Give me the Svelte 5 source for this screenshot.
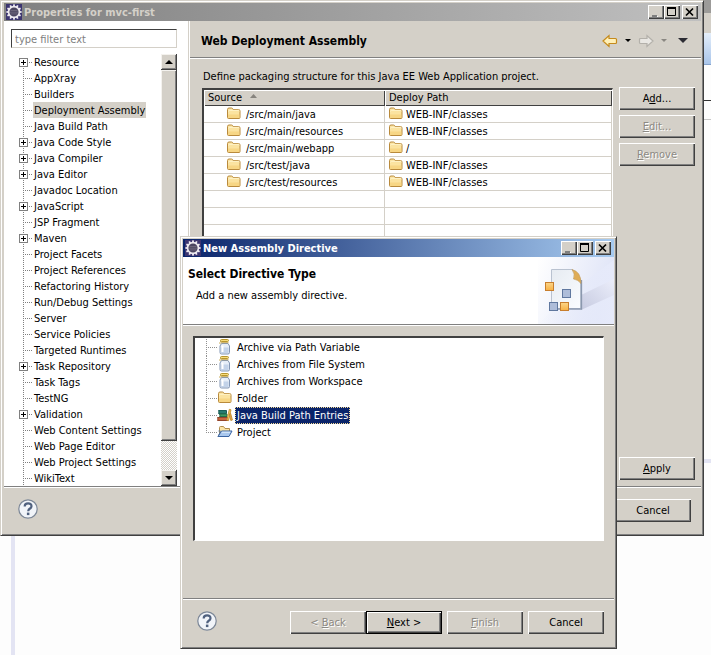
<script>
  const pages = [
    { name: 'Resource', open: true }, { name: 'AppXray' }, { name: 'Builders' },
    { name: 'Deployment Assembly', selected: true }, { name: 'Java Build Path' },
    { name: 'Java Code Style', open: true }, { name: 'Java Compiler', open: true },
    { name: 'Java Editor', open: true }, { name: 'Javadoc Location' },
    { name: 'JavaScript', open: true }, { name: 'JSP Fragment' }, { name: 'Maven', open: true },
    { name: 'Project Facets' }, { name: 'Project References' }, { name: 'Refactoring History' },
    { name: 'Run/Debug Settings' }, { name: 'Server' }, { name: 'Service Policies' },
    { name: 'Targeted Runtimes' }, { name: 'Task Repository', open: true }, { name: 'Task Tags' },
    { name: 'TestNG' }, { name: 'Validation', open: true }, { name: 'Web Content Settings' },
    { name: 'Web Page Editor' }, { name: 'Web Project Settings' }, { name: 'WikiText' }
  ];

  const mappings = [
    ['/src/main/java', 'WEB-INF/classes'],
    ['/src/main/resources', 'WEB-INF/classes'],
    ['/src/main/webapp', '/'],
    ['/src/test/java', 'WEB-INF/classes'],
    ['/src/test/resources', 'WEB-INF/classes']
  ];
  const emptyRows = Array.from({ length: 14 }, (_, i) => i);

  const directives = [
    { name: 'Archive via Path Variable', icon: 'jar' },
    { name: 'Archives from File System', icon: 'jar' },
    { name: 'Archives from Workspace', icon: 'jar' },
    { name: 'Folder', icon: 'folder' },
    { name: 'Java Build Path Entries', icon: 'books' },
    { name: 'Project', icon: 'project' }
  ];
  const teeth = Array.from({ length: 12 }, (_, i) => i * 30);
  let selected = $state('Java Build Path Entries');
</script>

{#snippet gear()}
  <svg class="gear" width="16" height="16" viewBox="0 0 16 16" aria-hidden="true">
    <rect width="16" height="16" fill="#3c3570" />
    <circle cx="8" cy="8" r="5.4" fill="#4b4560" stroke="#eeeaf0" stroke-width="1.6" />
    {#each teeth as a}
      <rect x="7.1" y="0.4" width="1.8" height="2.4" fill="#eeeaf0" transform="rotate({a} 8 8)" />
    {/each}
    <path d="M4.5 6.5h7M4 8.2h8M4.6 9.9h6.8" stroke="#746c80" stroke-width="0.8" />
  </svg>
{/snippet}

{#snippet folder()}
  <svg width="16" height="16" viewBox="0 0 16 16" aria-hidden="true">
    <path d="M1.500 11.500v-8q0-1.500 1.500-1.500h2.500q1.200 0 1.500 1.500h5.500q1.500 0 1.500 1.500v6.500q0 1-1 1h-10.500q-1 0-1-1z" fill="#fbe3a0" stroke="#b98a3c" />
    <path d="M2.500 5.500q0-1.200 1.200-1.200h8.600q1 0 1 1" fill="none" stroke="#fff4cc" />
    <path d="M2 8.500h11.500v3.500h-11.500z" fill="#f5cd73" opacity=".6" />
  </svg>
{/snippet}

{#snippet jar()}
  <svg width="16" height="16" viewBox="0 0 16 16" aria-hidden="true">
    <path d="M3 5q-.5-2 1-3" fill="none" stroke="#c8a950" />
    <rect x="3.500" y=".5" width="8" height="2" rx="1" fill="#f6dc7c" stroke="#b7952b" />
    <path d="M4.500 4.500l-1.500 2.500v6.500q0 1.500 1.500 1.500h6.500q1.500 0 1.500-1.500v-6.500l-1.500-2.500z" fill="#e6eef8" stroke="#8397b4" />
    <path d="M4 8.500h7.500v5.500h-7.500z" fill="#c3d3e9" />
    <path d="M5.500 6.500v6.500" stroke="#fff" stroke-width="2" />
    <path d="M4 3.700h7.500" stroke="#c8a950" />
  </svg>
{/snippet}

{#snippet books()}
  <svg width="16" height="16" viewBox="0 0 16 16" aria-hidden="true">
    <path d="M1.500 3.500h8v3h-8q1-1.500 0-3z" fill="#287b70" stroke="#1a5f59" />
    <path d="M2.500 7h7.500v2.500h-7.500q1-1.200 0-2.500z" fill="#3f9d62" stroke="#276c48" />
    <path d="M.5 10.500h10.500v3h-10.500q1-1.500 0-3z" fill="#c9683e" stroke="#94452b" />
    <path d="M9.800 13.300l2.500-11 1.700.5-2.400 10.800z" fill="#f3c65c" stroke="#c08928" stroke-width=".8" />
    <path d="M12.500 7l1.200-.5 1.700 6.500-1.600.5z" fill="#edb24c" stroke="#b97e25" stroke-width=".8" />
  </svg>
{/snippet}

{#snippet project()}
  <svg width="16" height="16" viewBox="0 0 16 16" aria-hidden="true">
    <path d="M2.500 12v-8.500q0-1 1-1h3l1.500 2h4.500v3" fill="#fbe5a5" stroke="#b18f4f" />
    <path d="M1 12.500l3.500-5.500h10.500l-3 5.500z" fill="#a9c7ed" stroke="#3a64a3" />
    <path d="M4.800 8.200h8.500" stroke="#e3effb" />
    <path d="M1.500 7h2M1 12.500l2.500-5" stroke="#51739f" />
  </svg>
{/snippet}

{#snippet help()}
  <svg width="20" height="20" viewBox="0 0 20 20" aria-hidden="true">
    <circle cx="10" cy="10" r="9.200" fill="#f1f4f9" stroke="#7c8797" stroke-width="1.200" />
    <path d="M6.700 7.500q0-3.100 3.400-3.100t3.400 2.800q0 1.500-1.800 2.600-1.500.9-1.500 2.500" fill="none" stroke="#50617f" stroke-width="2.200" />
    <rect x="8.900" y="13.600" width="2.500" height="2.500" fill="#50617f" />
  </svg>
{/snippet}

{#snippet captionButtons(dim)}
  <div class="caption-buttons">
    <button aria-label="Minimize" disabled={dim}>
      <svg width="12" height="10" viewBox="0 0 12 10"><path d="M4 10h5" stroke="#fff" stroke-width="2" /><path d="M3 9h5" stroke="#808080" stroke-width="2" /></svg>
    </button>
    <button aria-label="Maximize">
      <svg width="12" height="10" viewBox="0 0 12 10"><path d="M2.500 1.500h8v7h-8z" fill="none" stroke="#000" /><path d="M2 1h9" stroke="#000" stroke-width="2" /></svg>
    </button>
    <button class="close" aria-label="Close">
      <svg width="12" height="10" viewBox="0 0 12 10"><path d="M3 1.500l7 7M10 1.500l-7 7" stroke="#000" stroke-width="1.700" /></svg>
    </button>
  </div>
{/snippet}

<div class="desktop">
  <div class="backdrop" aria-hidden="true">
    <div class="bd-title"></div>
    <div class="bd-menu"></div>
    <div class="bd-tabs"></div>
    <div class="bd-view"></div>
    <div class="bd-row"></div>
    <div class="bd-split"></div>
  </div>
  <div class="backdrop-line" aria-hidden="true"></div>

  <section class="window properties" aria-label="Properties for mvc-first">
    <header class="titlebar inactive">
      {@render gear()}
      <span class="caption">Properties for mvc-first</span>
      {@render captionButtons(true)}
    </header>

    <div class="body">
      <nav class="pages">
        <input class="filter" type="text" placeholder="type filter text" aria-label="Filter pages" />
        <div class="tree-area">
          <ul class="tree">
            {#each pages as p}
              <li>
                <span class="twig">
                  {#if p.open}<button class="plus" aria-label="Expand {p.name}"></button>{/if}
                </span>
                <span class="label" class:current={p.selected}>{p.name}</span>
              </li>
            {/each}
          </ul>
          <div class="scrollbar">
            <button aria-label="Scroll up"><svg width="8" height="4" viewBox="0 0 8 4"><path d="M4 0l4 4h-8z" /></svg></button>
            <div class="thumb"></div>
            <div class="track"></div>
            <button aria-label="Scroll down"><svg width="8" height="4" viewBox="0 0 8 4"><path d="M0 0h8l-4 4z" /></svg></button>
          </div>
        </div>
      </nav>

      <main class="page">
        <div class="page-head">
          <h1>Web Deployment Assembly</h1>
          <div class="history">
            <button aria-label="Back">
              <svg width="16" height="14" viewBox="0 0 16 14"><path d="M1 7l6-5.500v3h6.500q1 0 1 1v3q0 1-1 1h-6.500v3z" fill="#fff0b8" stroke="#c58a1c" stroke-width="1.200" /></svg>
            </button>
            <button aria-label="Back history"><svg width="6" height="3" viewBox="0 0 6 3"><path d="M0 0h6l-3 3z" /></svg></button>
            <button aria-label="Forward" disabled>
              <svg width="16" height="14" viewBox="0 0 16 14"><path d="M15 7l-6-5.500v3h-6.500q-1 0-1 1v3q0 1 1 1h6.500v3z" fill="#e9e7e3" stroke="#b3b0aa" stroke-width="1.200" /></svg>
            </button>
            <button aria-label="Forward history" disabled><svg width="6" height="3" viewBox="0 0 6 3"><path d="M0 0h6l-3 3z" fill="#8a8782" /></svg></button>
            <button class="menu" aria-label="Menu"><svg width="10" height="5" viewBox="0 0 10 5"><path d="M0 0h10l-5 5z" fill="#2b2b33" /></svg></button>
          </div>
        </div>
        <div class="page-body">
          <p>Define packaging structure for this Java EE Web Application project.</p>
          <div class="assembly">
            <div class="table-box">
              <table>
                <colgroup><col class="c-source" /><col /></colgroup>
                <thead>
                  <tr>
                    <th>Source <svg class="sort" width="7" height="4" viewBox="0 0 7 4"><path d="M3.500 0l3.500 4h-7z" fill="#87847e" /></svg></th>
                    <th>Deploy Path</th>
                  </tr>
                </thead>
                <tbody>
                  {#each mappings as [source, path]}
                    <tr>
                      <td><div class="cell source">{@render folder()}<span>{source}</span></div></td>
                      <td><div class="cell">{@render folder()}<span>{path}</span></div></td>
                    </tr>
                  {/each}
                  {#each emptyRows as r (r)}
                    <tr><td></td><td></td></tr>
                  {/each}
                </tbody>
              </table>
            </div>
            <div class="side">
              <button class="btn">A<u>d</u>d...</button>
              <button class="btn" disabled><u>E</u>dit...</button>
              <button class="btn" disabled><u>R</u>emove</button>
              <button class="btn apply"><u>A</u>pply</button>
            </div>
          </div>
        </div>
      </main>
    </div>

    <footer class="foot props-foot">
      <button class="help" aria-label="Help">{@render help()}</button>
      <button class="btn">Cancel</button>
    </footer>
  </section>

  <section class="window dialog" role="dialog" aria-label="New Assembly Directive">
    <header class="titlebar">
      {@render gear()}
      <span class="caption">New Assembly Directive</span>
      {@render captionButtons(false)}
    </header>
    <div class="banner">
      <div class="banner-text">
        <h2>Select Directive Type</h2>
        <p>Add a new assembly directive.</p>
      </div>
      <svg class="art" width="76" height="67" viewBox="0 0 76 67" aria-hidden="true">
        <defs>
          <linearGradient id="sky" x1="0" x2="1" y1="0" y2="0.300"><stop offset="0" stop-color="#fff" /><stop offset="1" stop-color="#dfe4f7" /></linearGradient>
          <linearGradient id="haze" x1="0" x2="1" y1="0" y2="0"><stop offset="0" stop-color="#e6eafa" stop-opacity="0" /><stop offset="1" stop-color="#e6eafa" /></linearGradient>
          <linearGradient id="shade" x1="0" x2="1" y1="1" y2="0"><stop offset="0" stop-color="#b9bdd6" /><stop offset="1" stop-color="#eef0fb" /></linearGradient>
          <linearGradient id="sheet" x1="0" x2="1" y1="0" y2="1"><stop offset="0" stop-color="#e6ebf1" /><stop offset="1" stop-color="#fafcff" /></linearGradient>
          <linearGradient id="amber" x1="0" x2="0" y1="0" y2="1"><stop offset="0" stop-color="#fbd68a" /><stop offset="1" stop-color="#f8b144" /></linearGradient>
        </defs>
        <rect width="76" height="67" fill="url(#sky)" />
        <path d="M42 28L76 3v64H0z" fill="url(#haze)" />
        <path d="M43 38L76 22v16L43 53z" fill="url(#shade)" opacity=".7" />
        <path d="M13.500 12.500h21l8 10v29h-29z" fill="url(#sheet)" stroke="#b9c2d0" />
        <path d="M14 52h29.500v-29" fill="none" stroke="#8b98ae" stroke-width="1.300" />
        <path d="M34 12.500q9 2 9 14-3-4-7.500-4.500 2-5-1.500-9.500z" fill="#dfac55" stroke="#bf9650" stroke-width=".6" />
        <g stroke="#c87e2d"><rect x="7.500" y="25.500" width="8" height="8" fill="url(#amber)" /><rect x="22.500" y="45.500" width="8" height="8" fill="url(#amber)" /></g>
        <g fill="#aebdd9" stroke="#60789f"><rect x="24.500" y="32.500" width="8" height="8" /><rect x="11.500" y="45.500" width="8" height="8" /></g>
      </svg>
    </div>
    <div class="dialog-body">
      <ul class="directives" role="listbox" aria-label="Directive types">
        {#each directives as d}
          <li role="option" aria-selected={selected === d.name}>
            <button onclick={() => (selected = d.name)}>
              {#if d.icon === 'jar'}{@render jar()}{:else if d.icon === 'folder'}{@render folder()}{:else if d.icon === 'books'}{@render books()}{:else}{@render project()}{/if}
              <span class:chosen={selected === d.name}>{d.name}</span>
            </button>
          </li>
        {/each}
      </ul>
    </div>
    <footer class="foot dialog-foot">
      <button class="help" aria-label="Help">{@render help()}</button>
      <div class="pair">
        <button class="btn" disabled>&lt; <u>B</u>ack</button>
        <button class="btn default"><u>N</u>ext &gt;</button>
      </div>
      <button class="btn" disabled><u>F</u>inish</button>
      <button class="btn">Cancel</button>
    </footer>
  </section>
</div>

<style>
  :global(body) { background: #fdfdfd; }
  .desktop {
    position: relative;
    box-sizing: border-box;
    min-height: 100vh;
    overflow: hidden;
    padding-right: 7px;
    font: 11px/16px "DejaVu Sans Condensed", "DejaVu Sans", sans-serif;
    color: #000;
  }
  .desktop :global(*) { box-sizing: border-box; }
  h1, h2, p, ul { margin: 0; padding: 0; }
  ul { list-style: none; }
  button { font: inherit; color: inherit; padding: 0; margin: 0; border: 0; background: none; }
  svg { display: block; flex: none; }

  .backdrop { position: absolute; top: 0; right: 0; width: 9px; }
  .bd-title { height: 13px; background: #9c9b99; }
  .bd-menu { height: 20px; background: #d4d0c8; }
  .bd-tabs { height: 32px; background: linear-gradient(#e4eefa, #a9c5ea); border-bottom: 1px solid #86a3cc; }
  .bd-view { height: 36px; border-bottom: 1px solid #333; }
  .bd-row { height: 19px; border-bottom: 1px solid #c8c8c8; }
  .bd-split { height: 343px; border-bottom: 4px solid #e3e4f3; }
  .backdrop-line { position: absolute; left: 11px; top: 0; bottom: 0; width: 4px; background: #e3e4f3; }

  .window {
    background: #d4d0c8;
    border: 1px solid;
    border-color: #d4d0c8 #404040 #404040 #d4d0c8;
    box-shadow: inset 1px 1px #fff, inset -1px -1px #808080;
    padding: 2px;
  }
  .properties { position: relative; padding-left: 3px; }
  .dialog { position: absolute; left: 180px; right: 94px; top: 236px; }

  .titlebar {
    display: flex;
    align-items: center;
    height: 18px;
    padding: 0 3px 0 2px;
    gap: 2px;
    background: linear-gradient(90deg, #0a246a, #a6caf0);
    color: #fff;
    font-weight: bold;
  }
  .inactive { background: linear-gradient(90deg, #808080, #c0c0c0); color: #d4d0c8; }
  .caption { flex: 1; padding-top: 1px; white-space: nowrap; }
  .caption-buttons { display: flex; }
  .caption-buttons button {
    width: 16px;
    height: 14px;
    padding: 1px;
    background: #d4d0c8;
    box-shadow: inset 1px 1px #fff, inset -1px -1px #404040, inset -2px -2px #808080;
  }
  .caption-buttons .close { margin-left: 2px; }

  .body { display: flex; border-bottom: 1px solid #808080; }
  .pages {
    flex: none;
    width: 185px;
    padding: 8px 11px 0 7px;
    background: #fff;
    border-right: 1px solid #d4d0c8;
  }
  .filter {
    display: block;
    width: 100%;
    height: 19px;
    margin-bottom: 6px;
    padding: 1px 3px 0;
    border: 1px solid;
    border-color: #404040 #d4d0c8 #d4d0c8 #404040;
    outline: 0;
    border-radius: 0;
    background: #fff;
    font: inherit;
  }
  .filter::placeholder { color: #808080; opacity: 1; }
  .tree-area { display: flex; }
  .tree { flex: 1; padding-left: 8px; }
  .tree li { display: flex; height: 16px; white-space: nowrap; }
  .twig {
    display: flex;
    align-items: center;
    width: 14px;
    background:
      repeating-linear-gradient(#808080 0 1px, transparent 1px 2px) 4px 0 / 1px 100% no-repeat,
      repeating-linear-gradient(90deg, #808080 0 1px, transparent 1px 2px) 4px 8px / 9px 1px no-repeat;
  }
  .tree li:first-child .twig { background-position: 4px 8px, 4px 8px; }
  .plus {
    width: 9px;
    height: 9px;
    border: 1px solid #808080;
    background:
      linear-gradient(#000, #000) 1px 3px / 5px 1px no-repeat,
      linear-gradient(#000, #000) 3px 1px / 1px 5px no-repeat,
      #fff;
  }
  .label { padding: 0 1px; line-height: 17px; }
  .current { background: #d4d0c8; }
  .scrollbar { display: flex; flex-direction: column; width: 16px; }
  .scrollbar button, .thumb {
    background: #d4d0c8;
    box-shadow: inset -1px -1px #404040, inset 1px 1px #f4f2ee, inset -2px -2px #808080;
  }
  .scrollbar button { display: grid; place-items: center; height: 16px; }
  .thumb { flex: 13; }
  .track { flex: 1; background: repeating-conic-gradient(#d4d0c8 0 25%, #fff 0 50%) 0 0 / 2px 2px; }

  .page { flex: 1; min-width: 0; display: flex; flex-direction: column; border-left: 1px solid #fff; }
  .page-head {
    display: flex;
    align-items: center;
    justify-content: space-between;
    height: 37px;
    padding: 3px 13px 0 11px;
    border-bottom: 1px solid #808080;
    box-shadow: 0 1px #fff;
  }
  h1, h2 { font-size: 12px; line-height: 20px; font-weight: bold; white-space: nowrap; }
  .history { display: flex; align-items: center; gap: 7px; }
  .history .menu { margin-left: 4px; }
  .page-body { flex: 1; display: flex; flex-direction: column; padding: 10px 6px 6px 12px; }
  .page-body p { padding-left: 1px; line-height: 17px; white-space: nowrap; }
  .assembly { flex: 1; display: flex; gap: 6px; padding-top: 2px; }
  .table-box {
    flex: 1;
    min-width: 0;
    margin-top: 1px;
    background: #fff;
    border: 2px solid;
    border-color: #404040 #fff #fff #404040;
    border-width: 2px 1px 1px 2px;
  }
  table { width: 100%; table-layout: fixed; border-collapse: separate; border-spacing: 0; }
  .c-source { width: 181px; }
  th {
    height: 16px;
    padding: 0 4px;
    text-align: left;
    font-weight: normal;
    line-height: 16px;
    background: #d4d0c8;
    box-shadow: inset 1px 1px #fff, inset -1px -1px #404040;
  }
  .sort { display: inline-block; margin-left: 5px; vertical-align: 3px; }
  td { height: 17px; padding: 0; border-bottom: 1px solid #d4d0c8; border-right: 1px solid #d4d0c8; line-height: 18px; }
  .cell { display: flex; height: 16px; padding-left: 3px; gap: 2px; }
  .source { padding-left: 22px; gap: 4px; }

  .side { flex: none; display: flex; flex-direction: column; width: 76px; gap: 5px; }
  .btn {
    flex: none;
    width: 76px;
    height: 23px;
    line-height: 21px;
    background: #d4d0c8;
    box-shadow: inset 1px 1px #fff, inset -1px -1px #404040, inset -2px -2px #808080;
  }
  .btn:disabled { color: #8c8983; text-shadow: 1px 1px #fff; }
  .default { border: 1px solid #000; line-height: 19px; }
  .apply { margin-top: auto; }
  .foot { display: flex; align-items: center; box-shadow: inset 0 1px #fff; }
  .help { margin-bottom: 3px; }
  .props-foot { justify-content: space-between; height: 46px; padding: 0 10px 0 14px; }

  .banner {
    display: flex;
    justify-content: space-between;
    height: 68px;
    background: #fff;
    border-bottom: 1px solid #808080;
  }
  .banner-text { padding: 7px 0 0 5px; }
  .banner-text p { padding: 4px 0 0 8px; }
  .dialog-body { padding: 11px 10px 57px; border-bottom: 1px solid #808080; box-shadow: inset 0 1px #fff; }
  .directives {
    min-height: 205px;
    padding: 1px 0 0 11px;
    background: #fff;
    border: 2px solid;
    border-color: #404040 #fff #fff #404040;
    border-width: 2px 1px 1px 2px;
  }
  .directives li {
    height: 17px;
    padding-left: 11px;
    background:
      repeating-linear-gradient(#909090 0 1px, transparent 1px 2px) 0 0 / 1px 100% no-repeat,
      repeating-linear-gradient(90deg, #909090 0 1px, transparent 1px 2px) 0 8px / 11px 1px no-repeat;
  }
  .directives li:last-child { background-size: 1px 9px, 11px 1px; }
  .directives button { display: flex; height: 17px; gap: 2px; line-height: 15px; }
  .directives span { padding: 0 1px; border: 1px solid transparent; }
  .directives .chosen { background: #0a246a; color: #fff; border: 1px dotted #f5db95; }
  .dialog-foot { height: 47px; padding: 0 10px 0 14px; gap: 5px; }
  .dialog-foot .help { margin-right: auto; }
  .pair { display: flex; }
</style>
